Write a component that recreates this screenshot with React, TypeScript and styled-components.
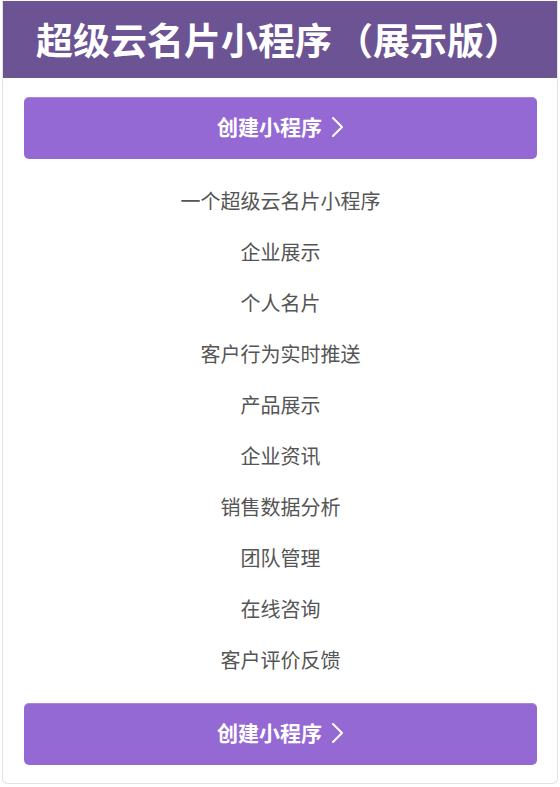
import {FC} from "react";
import styled, {createGlobalStyle} from "styled-components";

const GlobalStyle = createGlobalStyle`
  html, body {
    margin: 0;
    padding: 0;
    background: #ffffff;
  }
  body {
    font-family: "Noto Sans CJK SC", "Noto Sans", sans-serif;
  }
`;

const Page = styled.div`
  padding: 1px 2px 0 2px;
`;

const Card = styled.div`
  display: flex;
  flex-direction: column;
  height: 783px;
  box-sizing: border-box;
  border: 1px solid #e2e2e2;
  border-top: none;
  border-radius: 0 0 6px 6px;
  overflow: hidden;
`;

const Header = styled.div`
  height: 77px;
  margin: 0 -1px;
  background: #6c5394;
  display: flex;
  align-items: center;
  padding-left: 34px;
`;

const Title = styled.h1`
  margin: 0;
  color: #ffffff;
  font-size: 37px;
  font-weight: 700;
  line-height: 1;
`;

const Bracket = styled.span<{$open?: boolean}>`
  margin-left: ${(p) => (p.$open ? "4px" : "0")};
`;

const Body = styled.div`
  flex: 1;
  display: flex;
  flex-direction: column;
  padding: 19px 20px 17px 21px;
`;

const CreateButton = styled.button`
  display: flex;
  align-items: center;
  justify-content: center;
  gap: 8px;
  width: 100%;
  height: 62px;
  padding: 0 0 4px;
  border: none;
  border-top: 1px solid #aa86e0;
  border-radius: 5px;
  background: #9569d4;
  color: #ffffff;
  font-family: inherit;
  font-size: 21px;
  font-weight: 700;
  line-height: 1;
  cursor: pointer;
`;

const List = styled.ul`
  list-style: none;
  margin: 0;
  padding: 16px 0 18px;
  display: flex;
  flex-direction: column;
`;

const Item = styled.li`
  height: 51px;
  display: flex;
  align-items: center;
  justify-content: center;
  color: #555555;
  font-size: 20px;
`;

const Chevron: FC = () => (
  <svg width="14" height="22" viewBox="0 0 14 22" fill="none">
    <path d="M3 2 L12 11 L3 20" stroke="#ffffff" strokeWidth="2" strokeLinecap="round" strokeLinejoin="round" />
  </svg>
);

const features = [
  "一个超级云名片小程序",
  "企业展示",
  "个人名片",
  "客户行为实时推送",
  "产品展示",
  "企业资讯",
  "销售数据分析",
  "团队管理",
  "在线咨询",
  "客户评价反馈",
];

const App: FC = () => {
  return (
    <>
      <GlobalStyle />
      <Page>
        <Card>
          <Header>
            <Title>
              超级云名片小程序<Bracket $open>（</Bracket>展示版<Bracket>）</Bracket>
            </Title>
          </Header>
          <Body>
            <CreateButton>
              创建小程序 <Chevron />
            </CreateButton>
            <List>
              {features.map((f) => (
                <Item key={f}>{f}</Item>
              ))}
            </List>
            <CreateButton>
              创建小程序 <Chevron />
            </CreateButton>
          </Body>
        </Card>
      </Page>
    </>
  );
};

export default App;
